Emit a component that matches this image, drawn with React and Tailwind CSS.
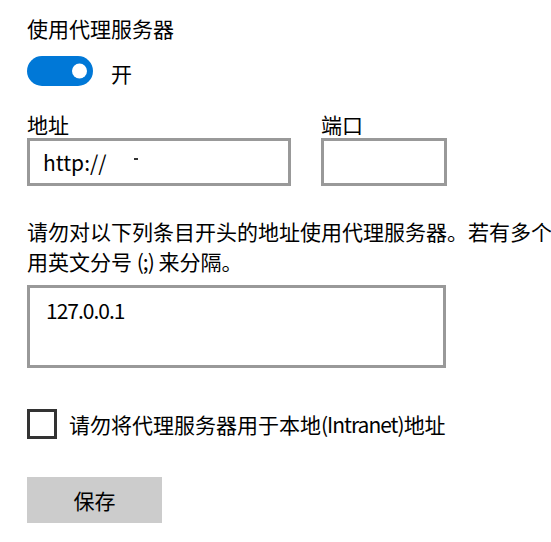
import { useState } from 'react'
import { clsx } from 'clsx'

const font = "font-['Noto_Sans_CJK_SC','Noto_Sans',sans-serif]"

const Toggle = ({ on, onChange }) => (
  <button
    onClick={() => onChange?.(!on)}
    className={clsx(
      'relative w-[66px] h-[30px] rounded-full flex items-center shrink-0',
      on ? 'bg-[#0078d7]' : 'bg-white border-[3px] border-black'
    )}
  >
    <span
      className={clsx(
        'absolute w-[15px] h-[15px] rounded-full top-1/2 -translate-y-1/2',
        on ? 'right-[6px] bg-white' : 'left-[6px] bg-black'
      )}
    />
  </button>
)

export default function App() {
  const [enabled, setEnabled] = useState(true)
  const [bypassLocal, setBypassLocal] = useState(false)

  return (
    <div className={clsx('w-[551px] h-[542px] overflow-hidden bg-white text-black text-[21px] leading-[28px] px-[27px] pt-[14px]', font)}>
      <p>使用代理服务器</p>

      {/* Toggle */}
      <div className="flex items-center mt-[14px] h-[30px]">
        <Toggle on={enabled} onChange={setEnabled} />
        <span className="ml-[18px] mt-[3px]">{enabled ? '开' : '关'}</span>
      </div>

      {/* Address + port */}
      <div className="flex mt-[24px] gap-[30px]">
        <div className="flex flex-col">
          <label>地址</label>
          <div className="w-[264px] h-[48px] border-[3px] border-[#999] flex items-center pl-[13px]">
            <span>http://</span>
            <span className="inline-block w-[4px] h-[2px] bg-[#333] ml-[28px] -mt-[6px]" />
          </div>
        </div>
        <div className="flex flex-col">
          <label>端口</label>
          <div className="w-[126px] h-[48px] border-[3px] border-[#999]" />
        </div>
      </div>

      {/* Exceptions */}
      <div className="mt-[30px] leading-[30px] whitespace-nowrap w-[700px]">
        <p>请勿对以下列条目开头的地址使用代理服务器。若有多个条目，请使</p>
        <p>用英文分号 <span className="tracking-[-1px]">(;)</span> 来分隔。</p>
      </div>
      <div className="mt-[9px] w-[419px] h-[83px] border-[3px] border-[#999] pl-[16px] pt-[8px] tracking-[-1px]">
        127.0.0.1
      </div>

      {/* Local bypass */}
      <label className="flex items-center mt-[41px] h-[30px] cursor-pointer" onClick={() => setBypassLocal(v => !v)}>
        <span className={clsx('w-[30px] h-[30px] border-[3px] border-[#333] shrink-0', bypassLocal && 'bg-[#0078d7] border-[#0078d7]')} />
        <span className="ml-[12px]">
          请勿将代理服务器用于本地<span className="tracking-[-1px]">(Intranet)</span>地址
        </span>
      </label>

      <button className="mt-[38px] w-[135px] h-[46px] bg-[#ccc] flex items-center justify-center">
        保存
      </button>
    </div>
  )
}
